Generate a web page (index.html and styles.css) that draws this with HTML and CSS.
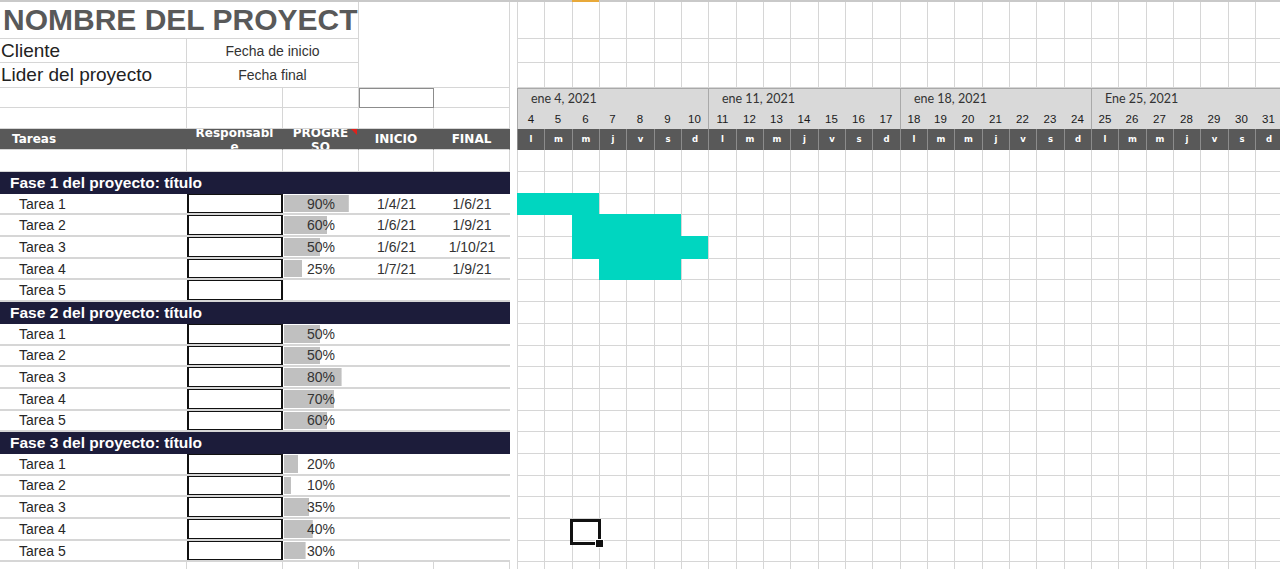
FILE: index.html
```html
<!DOCTYPE html>
<html lang="es">
<head>
<meta charset="utf-8">
<title>Diagrama de Gantt</title>
<link rel="stylesheet" href="styles.css">
</head>
<body>
<div class="sheet">
  <div class="left">
    <div class="top">
      <div class="c title">NOMBRE DEL PROYECT</div>
      <div class="c merged"></div>
      <div class="c lbl">Cliente</div>
      <div class="c meta">Fecha de inicio</div>
      <div class="c lbl">Lider del proyecto</div>
      <div class="c meta">Fecha final</div>
      <div class="c"></div><div class="c"></div><div class="c"></div><div class="c boxed"></div><div class="c"></div>
      <div class="c"></div><div class="c"></div><div class="c"></div><div class="c"></div><div class="c"></div>
      <div class="c hd hd-left">Tareas</div>
      <div class="c hd hd-wrap"><span class="w-resp">Responsable</span></div>
      <div class="c hd hd-wrap hd-note"><span class="w-prog">PROGRESO</span></div>
      <div class="c hd">INICIO</div>
      <div class="c hd">FINAL</div>
      <div class="c"></div><div class="c"></div><div class="c"></div><div class="c"></div><div class="c"></div>
    </div>

    <div class="row phase"><div class="ph">Fase 1 del proyecto: título</div></div>
    <div class="row task"><div class="name">Tarea 1</div><div class="resp"></div><div class="prog" style="--p:90">90%</div><div class="date">1/4/21</div><div class="date">1/6/21</div></div>
    <div class="row task"><div class="name">Tarea 2</div><div class="resp"></div><div class="prog" style="--p:60">60%</div><div class="date">1/6/21</div><div class="date">1/9/21</div></div>
    <div class="row task"><div class="name">Tarea 3</div><div class="resp"></div><div class="prog" style="--p:50">50%</div><div class="date">1/6/21</div><div class="date">1/10/21</div></div>
    <div class="row task"><div class="name">Tarea 4</div><div class="resp"></div><div class="prog" style="--p:25">25%</div><div class="date">1/7/21</div><div class="date">1/9/21</div></div>
    <div class="row task"><div class="name">Tarea 5</div><div class="resp"></div><div class="prog"></div><div class="date"></div><div class="date"></div></div>

    <div class="row phase"><div class="ph">Fase 2 del proyecto: título</div></div>
    <div class="row task"><div class="name">Tarea 1</div><div class="resp"></div><div class="prog" style="--p:50">50%</div><div class="date"></div><div class="date"></div></div>
    <div class="row task"><div class="name">Tarea 2</div><div class="resp"></div><div class="prog" style="--p:50">50%</div><div class="date"></div><div class="date"></div></div>
    <div class="row task"><div class="name">Tarea 3</div><div class="resp"></div><div class="prog" style="--p:80">80%</div><div class="date"></div><div class="date"></div></div>
    <div class="row task"><div class="name">Tarea 4</div><div class="resp"></div><div class="prog" style="--p:70">70%</div><div class="date"></div><div class="date"></div></div>
    <div class="row task"><div class="name">Tarea 5</div><div class="resp"></div><div class="prog" style="--p:60">60%</div><div class="date"></div><div class="date"></div></div>

    <div class="row phase"><div class="ph">Fase 3 del proyecto: título</div></div>
    <div class="row task"><div class="name">Tarea 1</div><div class="resp"></div><div class="prog" style="--p:20">20%</div><div class="date"></div><div class="date"></div></div>
    <div class="row task"><div class="name">Tarea 2</div><div class="resp"></div><div class="prog" style="--p:10">10%</div><div class="date"></div><div class="date"></div></div>
    <div class="row task"><div class="name">Tarea 3</div><div class="resp"></div><div class="prog" style="--p:35">35%</div><div class="date"></div><div class="date"></div></div>
    <div class="row task"><div class="name">Tarea 4</div><div class="resp"></div><div class="prog" style="--p:40">40%</div><div class="date"></div><div class="date"></div></div>
    <div class="row task"><div class="name">Tarea 5</div><div class="resp"></div><div class="prog" style="--p:30">30%</div><div class="date"></div><div class="date"></div></div>

    <div class="row blank"><div></div><div></div><div></div><div></div><div></div></div>
  </div>

  <div class="gutter"></div>

  <div class="gantt">
    <div class="g-row h37"></div>
    <div class="g-row h24"></div>
    <div class="g-row h25"></div>
    <div class="band">
      <div class="week">ene 4, 2021</div>
      <div class="week">ene 11, 2021</div>
      <div class="week">ene 18, 2021</div>
      <div class="week">Ene 25, 2021</div>
      <div class="num wk">4</div><div class="num">5</div><div class="num">6</div><div class="num">7</div><div class="num">8</div><div class="num">9</div><div class="num">10</div>
      <div class="num wk">11</div><div class="num">12</div><div class="num">13</div><div class="num">14</div><div class="num">15</div><div class="num">16</div><div class="num">17</div>
      <div class="num wk">18</div><div class="num">19</div><div class="num">20</div><div class="num">21</div><div class="num">22</div><div class="num">23</div><div class="num">24</div>
      <div class="num wk">25</div><div class="num">26</div><div class="num">27</div><div class="num">28</div><div class="num">29</div><div class="num">30</div><div class="num">31</div>
    </div>
    <div class="days">
      <div>l</div><div>m</div><div>m</div><div>j</div><div>v</div><div>s</div><div>d</div>
      <div>l</div><div>m</div><div>m</div><div>j</div><div>v</div><div>s</div><div>d</div>
      <div>l</div><div>m</div><div>m</div><div>j</div><div>v</div><div>s</div><div>d</div>
      <div>l</div><div>m</div><div>m</div><div>j</div><div>v</div><div>s</div><div>d</div>
    </div>
    <div class="g-row h22"></div>

    <div class="g-row t"></div>
    <div class="g-row t"><div class="bar" style="grid-column:1 / 4"></div></div>
    <div class="g-row t"><div class="bar" style="grid-column:3 / 7"></div></div>
    <div class="g-row t"><div class="bar" style="grid-column:3 / 8"></div></div>
    <div class="g-row t"><div class="bar" style="grid-column:4 / 7"></div></div>
    <div class="g-row t"></div>
    <div class="g-row t"></div>
    <div class="g-row t"></div>
    <div class="g-row t"></div>
    <div class="g-row t"></div>
    <div class="g-row t"></div>
    <div class="g-row t"></div>
    <div class="g-row t"></div>
    <div class="g-row t"></div>
    <div class="g-row t"></div>
    <div class="g-row t"></div>
    <div class="g-row t"></div>
    <div class="g-row t"></div>
    <div class="g-row t"></div>
  </div>

  <div class="col-mark"></div>
  <div class="cursor"></div>
</div>
</body>
</html>
```

FILE: styles.css
```css
* { box-sizing: border-box; margin: 0; padding: 0; }

html, body {
  width: 1280px;
  height: 569px;
  overflow: hidden;
  background: #fff;
}

body {
  font-family: "Liberation Sans", Arial, sans-serif;
  color: #262626;
}

.sheet {
  position: relative;
  display: flex;
  width: 1280px;
  height: 569px;
  border-top: 2px solid #c9c9c9;
}

/* ---------- left table ---------- */
.left {
  flex: none;
  width: 510px;
}

.top {
  display: grid;
  grid-template-columns: 187px 96px 76px 75px 76px;
  grid-template-rows: 37px 24px 25px 20px 21px 21px 22px;
}

.c {
  border-right: 1px solid #d6d6d6;
  border-bottom: 1px solid #d6d6d6;
  display: flex;
  align-items: center;
  overflow: hidden;
  white-space: nowrap;
}

.title {
  grid-column: 1 / 4;
  padding-left: 3px;
  font-weight: bold;
  font-size: 30px;
  color: #595959;
}

.merged {
  grid-column: 4 / 6;
  grid-row: 1 / 4;
}

.lbl {
  padding-left: 1px;
  font-size: 19px;
  color: #222;
}

.meta {
  grid-column: span 2;
  justify-content: center;
  font-size: 14px;
  color: #333;
}

.boxed {
  border: 1px solid #8c8c8c;
}

.hd {
  position: relative;
  background: #595959;
  border-right-color: #595959;
  color: #fff;
  font-family: "DejaVu Sans", Verdana, sans-serif;
  font-weight: bold;
  font-size: 12px;
  justify-content: center;
}

.hd-left {
  justify-content: flex-start;
  padding-left: 12px;
}

.hd-wrap {
  align-items: flex-start;
}

.hd-wrap span {
  white-space: normal;
  word-break: break-all;
  text-align: center;
  line-height: 14px;
  margin-top: -3px;
  flex: none;
}

.w-resp { width: 80px; }
.w-prog { width: 60px; }

.hd-note::after {
  content: "";
  position: absolute;
  top: 0;
  right: 1px;
  border-top: 6px solid #e0201b;
  border-left: 6px solid transparent;
}

.row {
  display: grid;
  grid-template-columns: 187px 96px 76px 75px 76px;
  height: 21.7px;
}

.phase {
  background: #1c1c3a;
}

.ph {
  grid-column: 1 / 6;
  display: flex;
  align-items: center;
  padding-left: 10px;
  color: #fff;
  font-weight: bold;
  font-size: 15.5px;
  white-space: nowrap;
}

.task {
  border-bottom: 2px solid #d6d6d6;
  font-size: 14px;
}

.task > div {
  display: flex;
  align-items: center;
}

.name {
  padding-left: 19px;
  color: #262626;
}

.resp {
  border: 1px solid #111;
  border-left-width: 2px;
  border-right-width: 2px;
  background: #fff;
}

.prog {
  padding-left: 24px;
  color: #333;
  background-image: linear-gradient(#c0c0c0, #c0c0c0);
  background-repeat: no-repeat;
  background-position: 1px 1px;
  background-size: calc(var(--p, 0) * 0.72px) calc(100% - 2px);
}

.date {
  justify-content: center;
  color: #333;
}

.blank > div {
  border-right: 1px solid #d6d6d6;
}

/* ---------- gutter ---------- */
.gutter {
  flex: none;
  width: 7px;
}

/* ---------- gantt ---------- */
.gantt {
  flex: none;
  width: 820px;
  background-image: linear-gradient(90deg,
      #d6d6d6 0 1px, transparent 1px 27px,
      #d6d6d6 27px 28px, transparent 28px 55px,
      #d6d6d6 55px 56px, transparent 56px);
  background-size: 82px 100%;
  background-repeat: repeat-x;
}

.g-row,
.band,
.days {
  display: grid;
  grid-template-columns: repeat(10, 27px 28px 27px);
}

.g-row {
  border-bottom: 1px solid #d6d6d6;
}

.h37 { height: 37px; }
.h24 { height: 24px; }
.h25 { height: 25px; }
.h22 { height: 22px; }
.t   { height: 21.7px; }

.bar {
  background: #00d6c0;
  margin-top: -1px;
  margin-bottom: -1px;
}

.band {
  grid-template-rows: 20px 21px;
  height: 41px;
  background: #d9d9d9;
  border-top: 1px solid #a9a9a9;
}

.week {
  grid-row: 1;
  grid-column: span 7;
  border-left: 1px solid #a9a9a9;
  padding-left: 13px;
  font-family: Lato, "Open Sans", sans-serif;
  font-size: 12.5px;
  line-height: 20px;
  color: #333;
  white-space: nowrap;
}

.num {
  grid-row: 2;
  text-align: center;
  font-size: 11.5px;
  line-height: 21px;
  color: #1a1a1a;
}

.num.wk {
  border-left: 1px solid #a9a9a9;
}

.days {
  height: 21px;
}

.days > div {
  background: #595959;
  border-left: 1px solid #8c8c8c;
  color: #fff;
  text-align: center;
  font-family: "DejaVu Sans", Verdana, sans-serif;
  font-weight: bold;
  font-size: 8.5px;
  line-height: 21px;
}

/* ---------- overlays ---------- */
.col-mark {
  position: absolute;
  top: -2px;
  left: 572px;
  width: 27px;
  height: 2px;
  background: #e8a93a;
}

.cursor {
  position: absolute;
  left: 570px;
  top: 517px;
  width: 31px;
  height: 26px;
  border: 3px solid #111;
}

.cursor::after {
  content: "";
  position: absolute;
  right: -6px;
  bottom: -6px;
  width: 7px;
  height: 7px;
  background: #111;
  border: 1px solid #fff;
}
```
